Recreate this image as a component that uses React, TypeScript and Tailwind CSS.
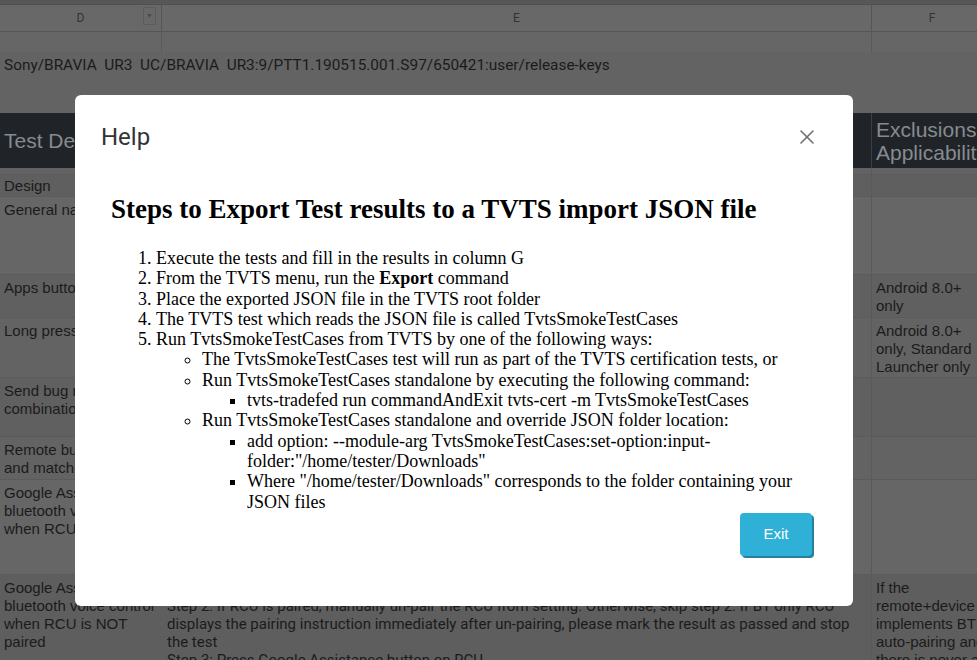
import { X } from 'lucide-react';

interface Row {
  h: string;
  bg: string;
  pt: string;
  d: string[];
  e: string[];
  f: string[];
}

const rows: Row[] = [
  { h: 'h-[7px]', bg: 'bg-[#626262]', pt: 'pt-0', d: [], e: [], f: [] },
  { h: 'h-[22px]', bg: 'bg-[#5f5f5f]', pt: 'pt-[2px]', d: ['Design'], e: [], f: [] },
  { h: 'h-[78px]', bg: 'bg-[#666666]', pt: 'pt-[4px]', d: ['General navigation'], e: [], f: [] },
  { h: 'h-[43px]', bg: 'bg-[#606060]', pt: 'pt-[4px]', d: ['Apps button'], e: [], f: ['Android 8.0+', 'only'] },
  {
    h: 'h-[60px]', bg: 'bg-[#636363]', pt: 'pt-[4px]',
    d: ['Long press Home'], e: [], f: ['Android 8.0+', 'only, Standard', 'Launcher only'],
  },
  { h: 'h-[59px]', bg: 'bg-[#606060]', pt: 'pt-[4px]', d: ['Send bug report', 'combination'], e: [], f: [] },
  { h: 'h-[43px]', bg: 'bg-[#636363]', pt: 'pt-[4px]', d: ['Remote buttons', 'and matching'], e: [], f: [] },
  {
    h: 'h-[95px]', bg: 'bg-[#666666]', pt: 'pt-[4px]',
    d: ['Google Assistant', 'bluetooth voice', 'when RCU is paired'], e: [], f: [],
  },
  {
    h: 'h-[100px]', bg: 'bg-[#5e5e5e]', pt: 'pt-[4px]',
    d: ['Google Assistant', 'bluetooth voice control', 'when RCU is NOT', 'paired'],
    e: [
      'Step 1: Make sure the device is on the home screen',
      'Step 2: If RCU is paired, manually un-pair the RCU from setting. Otherwise, skip step 2. If BT only RCU',
      'displays the pairing instruction immediately after un-pairing, please mark the result as passed and stop',
      'the test',
      'Step 3: Press Google Assistance button on RCU',
    ],
    f: ['If the', 'remote+device', 'implements BT', 'auto-pairing and', 'there is never a'],
  },
];

function Lines({ lines, roboto }: { lines: string[]; roboto?: boolean }) {
  return (
    <>
      {lines.map((l, i) => (
        <div
          key={i}
          className={`whitespace-nowrap leading-[18px] text-[#1b1b1b] ${
            roboto ? "font-['Roboto'] text-[15px]" : "font-['Liberation_Sans'] text-[15px]"
          }`}
        >
          {l}
        </div>
      ))}
    </>
  );
}

function Sheet() {
  return (
    <div className="flex flex-col">
      <div className="h-[5px] bg-[#575757] border-b border-[#505050]" />
      <div className="flex h-[27px] bg-[#686868] border-b border-[#555555] text-[12px] text-[#333] font-['Roboto']">
        <div className="relative w-[162px] shrink-0 flex items-center justify-center border-r border-[#555555]">
          D
          <div className="absolute left-[143px] top-[2px] w-[13px] h-[18px] border border-[#5c5c5c] flex items-center justify-center text-[7px] text-[#4a4a4a]">
            ▼
          </div>
        </div>
        <div className="w-[710px] shrink-0 flex items-center justify-center border-r border-[#555555]">E</div>
        <div className="w-[120px] shrink-0 flex items-center justify-center">F</div>
      </div>
      <div className="flex h-[20px] bg-[#666666]">
        <div className="w-[162px] shrink-0 border-r border-[#5a5a5a]" />
        <div className="w-[710px] shrink-0 border-r border-[#5a5a5a]" />
        <div className="w-[120px] shrink-0" />
      </div>
      <div className="h-[61px] bg-[#636363] pl-[4px] pt-[4px]">
        <div className="whitespace-nowrap font-['Roboto'] text-[15.4px] leading-[18px] text-[#1b1b1b]">
          Sony/BRAVIA&nbsp; UR3&nbsp; UC/BRAVIA&nbsp; UR3:9/PTT1.190515.001.S97/650421:user/release-keys
        </div>
      </div>
      <div className="flex h-[55px] bg-[#202428] font-['Liberation_Sans'] text-[21px] leading-[23px] text-[#868b90]">
        <div className="w-[162px] shrink-0 pl-[4px] flex items-center whitespace-nowrap">Test Description</div>
        <div className="w-[710px] shrink-0 pl-[5px] flex items-center border-r border-[#3b4045]">Steps</div>
        <div className="w-[120px] shrink-0 pl-[4px] flex flex-col justify-center whitespace-nowrap">
          <div>Exclusions /</div>
          <div>Applicability</div>
        </div>
      </div>
      {rows.map((r, i) => (
        <div key={i} className={`flex ${r.h} ${r.bg} border-b border-[#5b5b5b] overflow-hidden`}>
          <div className={`w-[162px] shrink-0 pl-[4px] ${r.pt} overflow-hidden`}>
            <Lines lines={r.d} />
          </div>
          <div className={`w-[710px] shrink-0 pl-[5px] ${r.pt} border-r border-[#5a5a5a]`}>
            <Lines lines={r.e} roboto />
          </div>
          <div className={`w-[120px] shrink-0 pl-[4px] ${r.pt}`}>
            <Lines lines={r.f} />
          </div>
        </div>
      ))}
    </div>
  );
}

function HelpDialog() {
  return (
    <div className="absolute left-[75px] top-[95px] w-[778px] h-[511px] bg-white rounded-[6px] flex flex-col">
      <div className="h-[84px] flex items-center justify-between pl-[26px] pr-[34px]">
        <span className="font-['Roboto'] text-[24px] text-[#333]">Help</span>
        <X size={24} strokeWidth={1.6} className="text-[#707070]" />
      </div>
      <div className="pl-[36px] pr-[36px] font-['Liberation_Serif'] text-black">
        <h2 className="mt-[15px] text-[27px] leading-[31px] font-bold whitespace-nowrap">
          Steps to Export Test results to a TVTS import JSON file
        </h2>
        <ol className="mt-[23px] pl-[45px] list-decimal text-[18px] leading-[20.3px]">
          <li>Execute the tests and fill in the results in column G</li>
          <li>
            From the TVTS menu, run the <b>Export</b> command
          </li>
          <li>Place the exported JSON file in the TVTS root folder</li>
          <li>The TVTS test which reads the JSON file is called TvtsSmokeTestCases</li>
          <li>
            Run TvtsSmokeTestCases from TVTS by one of the following ways:
            <ul className="pl-[46px] list-[circle]">
              <li>The TvtsSmokeTestCases test will run as part of the TVTS certification tests, or</li>
              <li>
                Run TvtsSmokeTestCases standalone by executing the following command:
                <ul className="pl-[45px] list-[square]">
                  <li>tvts-tradefed run commandAndExit tvts-cert -m TvtsSmokeTestCases</li>
                </ul>
              </li>
              <li>
                Run TvtsSmokeTestCases standalone and override JSON folder location:
                <ul className="pl-[45px] list-[square]">
                  <li>add option: --module-arg TvtsSmokeTestCases:set-option:input-folder:"/home/tester/Downloads"</li>
                  <li>Where "/home/tester/Downloads" corresponds to the folder containing your JSON files</li>
                </ul>
              </li>
            </ul>
          </li>
        </ol>
        <div className="flex justify-end mr-[5px] mt-[1px]">
          <button className="w-[72px] h-[43px] rounded-[4px] bg-[#2fb0d6] shadow-[2px_2px_0_#23819f] text-white font-['Liberation_Sans'] text-[15px]">
            Exit
          </button>
        </div>
      </div>
    </div>
  );
}

export default function App() {
  return (
    <div className="relative w-[977px] h-[660px] overflow-hidden bg-[#5e5e5e]">
      <Sheet />
      <HelpDialog />
    </div>
  );
}
